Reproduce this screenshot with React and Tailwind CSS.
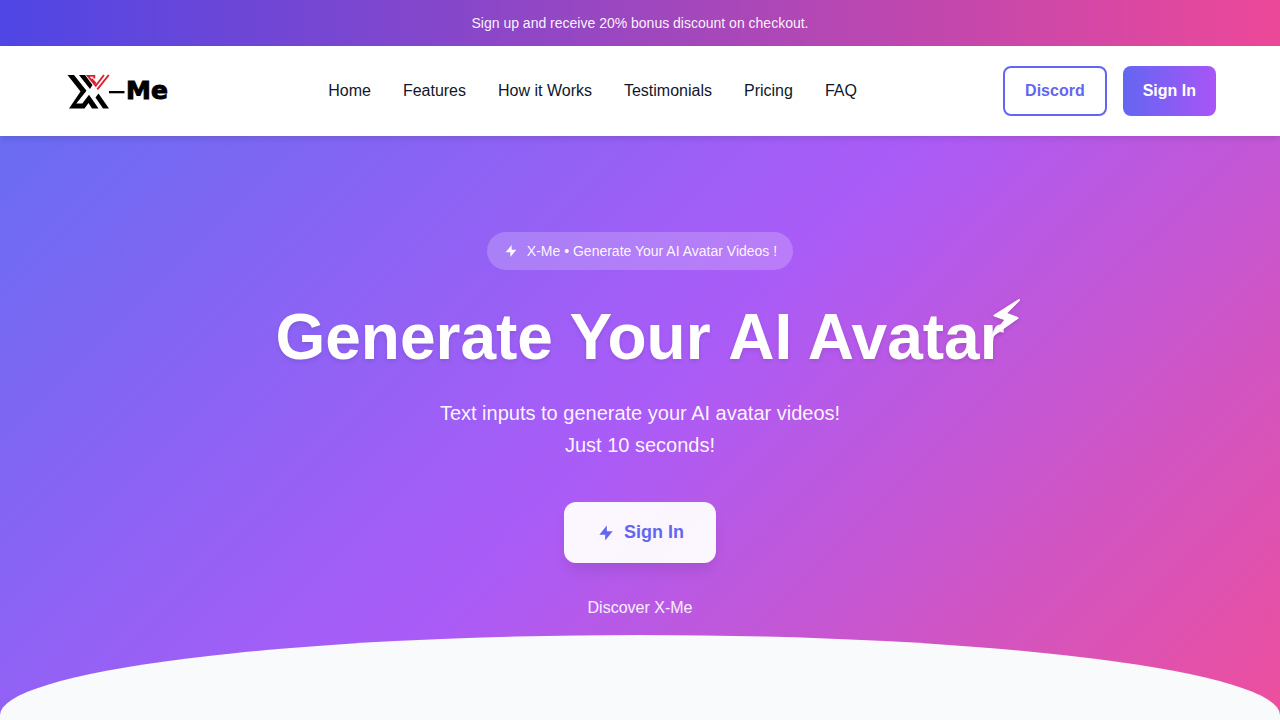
import React from "react";

const navItems = ["Home", "Features", "How it Works", "Testimonials", "Pricing", "FAQ"];

function Bolt({ className }) {
  return (
    <svg className={className} viewBox="0 0 24 24" fill="currentColor" aria-hidden="true">
      <path d="M13 10V3L4 14h7v7l9-11h-7z" />
    </svg>
  );
}

function Logo() {
  return (
    <a href="#home" aria-label="X-Me" className="flex w-[118px] items-center gap-px pl-[3px] text-black">
      <svg width="58" height="36" viewBox="0 -2 58 36" aria-hidden="true" className="shrink-0">
        <path d="M0.500 0h6.500l12.500 15.700L9.300 28.500h6l6.700-8.800L31.500 33.500h-6.500L21.500 28l-4 5.500H2L13.500 16.500z" />
        <path d="M12 0H18l7.500 10-2.500 4z" />
        <path d="M31.500 18.500L42 33.500H36L28.500 22.500z" />
        <path d="M27.300 3.600V.900H20.800L28.800 10.800 37 0M41.800 0L30.300 14.300M24.500 3.800L28.800 8.500" fill="none" stroke="#dc1f2e" strokeWidth="1.900" />
        <rect x="42" y="16" width="15.500" height="2.300" />
      </svg>
      <span className="font-['DejaVu_Sans',sans-serif] text-[25px] leading-8 font-bold [-webkit-text-stroke:1px_black]">Me</span>
    </a>
  );
}

export default function App() {
  return (
    <div className="min-h-screen bg-slate-50 font-['Liberation_Sans',Arial,sans-serif] text-slate-900">
      <div className="bg-[linear-gradient(90deg,#4f46e5,#ec4899)] px-4 py-3 text-center text-sm leading-[22px] text-white/95">
        Sign up and receive 20% bonus discount on checkout.
      </div>
      <header className="relative z-10 flex items-center justify-between bg-white px-16 py-5 shadow-[0_4px_6px_-1px_rgba(0,0,0,0.1)]">
        <Logo />
        <nav className="flex gap-8 leading-[26px]">
          {navItems.map((item) => (
            <a key={item} href="#home">{item}</a>
          ))}
        </nav>
        <div className="flex gap-4 leading-[26px] font-bold">
          <button className="rounded-lg border-2 border-[#6366f1] px-5 py-[10px] text-[#6366f1]">Discord</button>
          <button className="rounded-lg bg-[linear-gradient(90deg,#6366f1,#a855f7)] px-5 py-3 text-white">Sign In</button>
        </div>
      </header>
      <main className="relative flex flex-col items-center overflow-hidden bg-[linear-gradient(rgba(255,255,255,0.04),rgba(255,255,255,0.04)),linear-gradient(135deg,#6366f1_0%,#a855f7_50%,#ec4899_100%)] px-8 pt-24 pb-[94px] text-center text-white">
        <div className="absolute inset-x-0 bottom-0 h-20 bg-slate-50 [border-radius:50%_50%_0_0/100%_100%_0_0]" />
        <div className="flex items-center gap-2 rounded-full bg-white/20 px-4 py-2 text-sm leading-[22px] text-white/95">
          <Bolt className="size-4" />
          X-Me • Generate Your AI Avatar Videos !
        </div>
        <h1 className="mt-8 text-[64px] leading-[71px] font-bold [text-shadow:0_2px_4px_rgba(0,0,0,0.1)]">
          Generate Your{" "}
          <span className="relative inline-block">
            AI Avatar
            <svg className="absolute -top-1 -right-4 h-10 w-8 drop-shadow-sm" viewBox="0 0 32 40" fill="white" stroke="white" strokeWidth="2" strokeLinejoin="round" aria-hidden="true">
              <path d="M30 2L5.500 17.500 17 21.500 4.500 37 28.500 20 16.500 15.500z" />
            </svg>
          </span>
        </h1>
        <p className="mt-6 text-xl leading-8 text-white/95">
          Text inputs to generate your AI avatar videos!
          <br />
          Just 10 seconds!
        </p>
        <button className="mt-[41px] flex items-center gap-2 rounded-xl bg-white/95 px-8 py-4 text-lg leading-[29px] font-bold text-[#6366f1] shadow-[0_10px_15px_-3px_rgba(0,0,0,0.1)]">
          <Bolt className="size-5" />
          Sign In
        </button>
        <a href="#discover" className="relative mt-8 leading-[26px] text-white/90">Discover X-Me</a>
      </main>
    </div>
  );
}
